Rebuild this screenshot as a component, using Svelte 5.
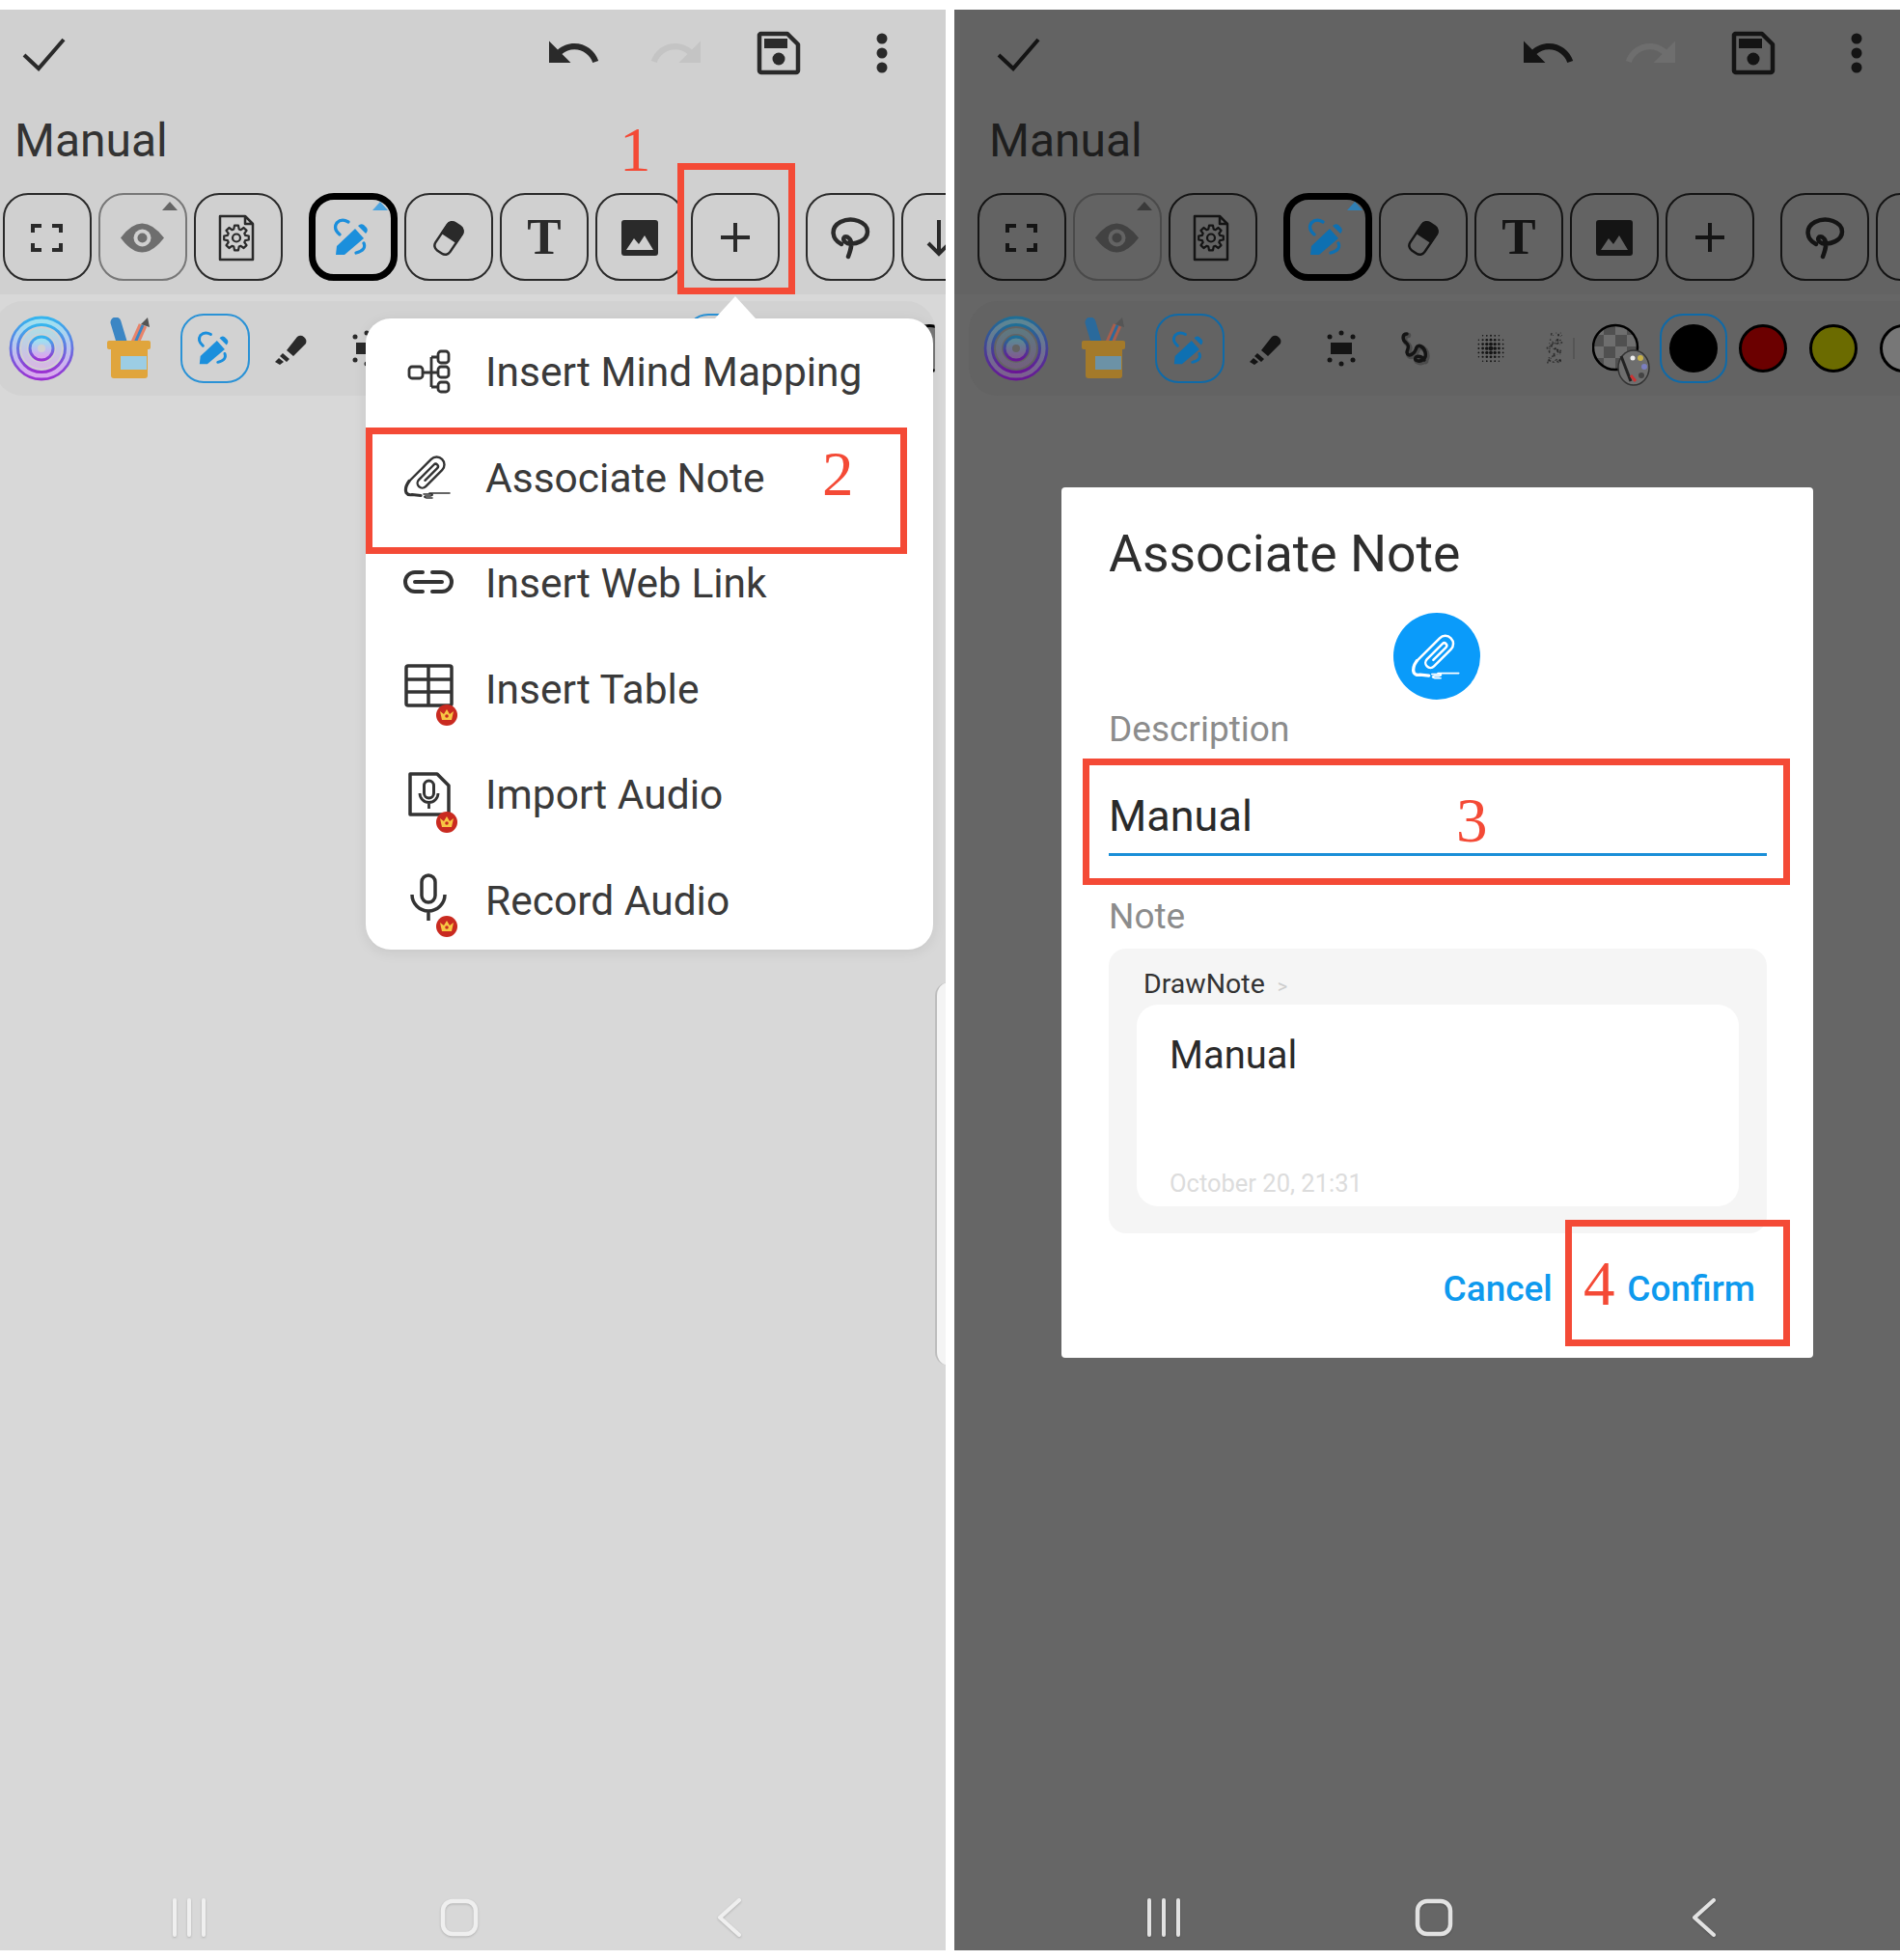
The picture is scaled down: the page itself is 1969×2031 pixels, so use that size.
<script>
  const menu = ['Insert Mind Mapping', 'Associate Note', 'Insert Web Link', 'Insert Table', 'Import Audio', 'Record Audio']

  // halftone brush preview
  const halftone = []
  for (let i = -3; i <= 3; i++) {
    for (let j = -3; j <= 3; j++) {
      const d = Math.hypot(i, j)
      if (d < 3.7) halftone.push({ x: 15 + i * 4.2, y: 16 + j * 4.4, r: Math.max(0.7, 2.3 - d * 0.45) })
    }
  }

  // speckle brush preview
  let seed = 7
  const rnd = () => (seed = (seed * 16807) % 2147483647) / 2147483647
  const speckle = Array.from({ length: 70 }, () => {
    const y = rnd() * 32 + 1
    return { x: 10 + (rnd() - 0.5) * 15, y, r: 0.4 + rnd() * 0.7 }
  })

  function gear(cx, cy, r1, r2, n) {
    const step = (Math.PI * 2) / n
    let d = ''
    for (let i = 0; i < n; i++) {
      const a = i * step
      const pts = [[a - step * 0.36, r1], [a - step * 0.2, r2], [a + step * 0.2, r2], [a + step * 0.36, r1]]
      for (const [t, r] of pts) {
        d += (d ? 'L' : 'M') + (cx + Math.cos(t) * r).toFixed(1) + ' ' + (cy + Math.sin(t) * r).toFixed(1)
      }
    }
    return d + 'Z'
  }
  const gearPath = gear(28, 30.5, 9.5, 13, 8)
</script>

{#snippet pen()}
  <path d="M12 48 L13 39 L32 21 L41 31 L21 48 Z" fill="var(--blue)" />
  <path d="M35 18 q3 -3 6 -1 l3 3 q2 3 -1 6 Z" fill="var(--blue)" />
  <path d="M25 14 q-7 -4 -12 1 q-4 6 3 12 M41 36 q3 7 -8 10" fill="none" stroke="var(--blue)" stroke-width="3.200" stroke-linecap="round" />
{/snippet}

{#snippet clip(color)}
  <g fill="none" stroke={color} stroke-linecap="round" stroke-linejoin="round">
    <path transform="rotate(45 30 26)" d="M22 46 V14 a8 8 0 0 1 16 0 V38 a5 5 0 0 1 -10 0 V16 a2.500 2.500 0 0 1 5 0 V34" stroke-width="2.400" />
    <path d="M10 34.500 q-5 7 -3 12 q2 3 6 2 l9 1" stroke-width="3.200" />
    <path d="M25 48 h8 q3 1 -1 2 h-5 q-3 1 1 2 h6 M31 47 h21" stroke-width="1.600" />
  </g>
{/snippet}

{#snippet crown(y)}
  <circle cx="49" cy={y} r="11" fill="#c92a20" />
  <path d="M42 {y - 4} L46 {y - 1} L49 {y - 6} L52 {y - 1} L56 {y - 4} L54 {y + 5} H44 Z" fill="#f7c744" />
  <circle cx="49" cy={y + 1} r="1.800" fill="#c92a20" />
{/snippet}

{#snippet app(key)}
  <div class="content">
    <header class="head">
      <div class="topbar">
        <svg class="check" width="46" height="60" viewBox="0 0 46 60">
          <path d="M3 32 L18 46 L44 16" fill="none" stroke="var(--ink)" stroke-width="4" />
        </svg>
        <svg class="undo" width="60" height="60" viewBox="0 0 24 24">
          <path d="M12.500 8c-2.650 0-5.050.99-6.900 2.600L2 7v9h9l-3.620-3.620c1.390-1.160 3.160-1.880 5.120-1.880 3.540 0 6.550 2.310 7.600 5.500l2.370-.78C21.080 11.030 17.150 8 12.500 8z" fill="var(--ink)" />
        </svg>
        <svg class="redo" width="60" height="60" viewBox="0 0 24 24">
          <path d="M18.400 10.600C16.550 8.990 14.150 8 11.500 8c-4.650 0-8.580 3.030-9.960 7.220L3.900 16c1.050-3.190 4.050-5.500 7.600-5.500 1.950 0 3.730.72 5.120 1.880L13 16h9V7l-3.600 3.600z" fill="var(--redo)" />
        </svg>
        <svg class="save" width="48" height="60" viewBox="0 0 48 60">
          <path d="M5 10 H33 L44 21 V48 a2 2 0 0 1 -2 2 H6 a2 2 0 0 1 -2 -2 V11 Z" fill="none" stroke="var(--ink)" stroke-width="4.500" stroke-linejoin="round" />
          <rect x="9" y="15" width="24" height="10" fill="var(--ink)" />
          <circle cx="24" cy="36" r="6.500" fill="var(--ink)" />
        </svg>
        <svg class="more" width="20" height="60" viewBox="0 0 20 60">
          <circle cx="10" cy="15" r="5.500" fill="var(--ink)" />
          <circle cx="10" cy="30" r="5.500" fill="var(--ink)" />
          <circle cx="10" cy="45" r="5.500" fill="var(--ink)" />
        </svg>
      </div>
      <div class="title">Manual</div>
      <div class="tools">
        <div class="group">
          <div class="btn">
            <svg width="60" height="60" viewBox="0 0 60 60"><path d="M15 25 V18 H24 M35 18 H44 V25 M44 36 V43 H35 M24 43 H15 V36" fill="none" stroke="var(--ink)" stroke-width="4" /></svg>
          </div>
          <div class="btn muted">
            <svg width="60" height="60" viewBox="0 0 60 60">
              <path d="M7 30.500 Q29 0.500 52 30.500 Q29 60.500 7 30.500 Z" fill="var(--eye)" />
              <circle cx="29.500" cy="30.500" r="9" fill="var(--head)" />
              <circle cx="29.500" cy="30.500" r="5" fill="var(--eye)" />
            </svg>
            <span class="tri"></span>
          </div>
          <div class="btn">
            <svg width="60" height="60" viewBox="0 0 60 60">
              <path d="M11 8 H37 L45 16 V53 H11 Z M37 8 V16 H45" fill="none" stroke="var(--ink)" stroke-width="2.500" stroke-linejoin="round" />
              <path d={gearPath} fill="none" stroke="var(--ink)" stroke-width="2.200" stroke-linejoin="round" />
              <circle cx="28" cy="30.500" r="4" fill="none" stroke="var(--ink)" stroke-width="2.200" />
            </svg>
          </div>
        </div>
        <div class="group">
          <div class="btn active">
            <svg width="60" height="60" viewBox="0 0 60 60">{@render pen()}</svg>
            <span class="tri blue"></span>
          </div>
          <div class="btn">
            <svg width="60" height="60" viewBox="0 0 60 60">
              <g transform="rotate(34 30 31)">
                <rect x="21" y="14" width="18" height="34" rx="6" fill="none" stroke="var(--ink)" stroke-width="2.500" />
                <path d="M20 31 V20 a6 6 0 0 1 6 -6 h8 a6 6 0 0 1 6 6 V31 Z" fill="var(--ink)" />
              </g>
            </svg>
          </div>
          <div class="btn"><span class="t-icon">T</span></div>
          <div class="btn">
            <svg width="60" height="60" viewBox="0 0 60 60">
              <rect x="11" y="12" width="38" height="37" rx="3" fill="var(--ink)" />
              <path d="M16 43 L24 31 L29 37 L35 28 L44 43 Z" fill="var(--head)" />
            </svg>
          </div>
          <div class="btn">
            <svg width="60" height="60" viewBox="0 0 60 60"><path d="M30 15 V45 M15 30 H45" stroke="var(--ink)" stroke-width="4" /></svg>
          </div>
        </div>
        <div class="group">
          <div class="btn">
            <svg width="60" height="60" viewBox="0 0 60 60">
              <path d="M21 37 C11 32 9 20 20 14 C32 8 48 14 48 24 C48 33 36 38 27 36 C20 33 24 26 29 31 C33 35 31 42 28 50" fill="none" stroke="var(--ink)" stroke-width="4.500" stroke-linecap="round" />
            </svg>
          </div>
          <div class="btn">
            <svg width="60" height="60" viewBox="0 0 60 60"><path d="M23 12 V47 M12 36 L23 47 L34 36" fill="none" stroke="var(--ink)" stroke-width="4" /></svg>
          </div>
        </div>
      </div>
    </header>

    <div class="strip">
      <svg width="68" height="68" viewBox="0 0 68 68">
        <defs>
          <linearGradient id="rings-{key}" x1="0" y1="0" x2="0" y2="1">
            <stop offset="0" stop-color="var(--ring1)" />
            <stop offset="1" stop-color="var(--ring2)" />
          </linearGradient>
          <linearGradient id="soft-{key}" x1="0" y1="0" x2="0" y2="1">
            <stop offset="0" stop-color="var(--soft1)" />
            <stop offset="1" stop-color="var(--soft2)" />
          </linearGradient>
        </defs>
        <circle cx="34" cy="34" r="28" fill="none" stroke="url(#soft-{key})" stroke-width="8" />
        <circle cx="34" cy="34" r="8" fill="none" stroke="url(#soft-{key})" stroke-width="8" />
        <circle cx="34" cy="34" r="18" fill="none" stroke="url(#soft-{key})" stroke-width="6" opacity="0.6" />
        <circle cx="34" cy="34" r="32" fill="none" stroke="url(#rings-{key})" stroke-width="2.800" />
        <circle cx="34" cy="34" r="24.500" fill="none" stroke="url(#rings-{key})" stroke-width="3" />
        <circle cx="34" cy="34" r="12" fill="none" stroke="url(#rings-{key})" stroke-width="3" />
      </svg>
      <svg width="46" height="64" viewBox="0 0 46 64">
        <path d="M9 5 L15 25" stroke="var(--pen1)" stroke-width="11" stroke-linecap="round" />
        <path d="M37 8 L29 26" stroke="var(--pen2)" stroke-width="9" />
        <path d="M37 8 L29 26" stroke="var(--pen1)" stroke-width="3" />
        <path d="M35 7 L42 0 L44 10 Z" fill="#555" />
        <rect y="24" width="45" height="9" rx="2" fill="var(--cup)" />
        <rect x="4" y="30" width="38" height="33" rx="3" fill="var(--cup)" />
        <rect x="14" y="40" width="27" height="14" fill="var(--label)" />
      </svg>
      <div class="sel pen-box">
        <svg width="54" height="54" viewBox="0 0 60 60">{@render pen()}</svg>
      </div>
      <svg width="34" height="34" viewBox="0 0 34 34">
        <path d="M12 19 L23 5 a6 6 0 0 1 9 7 L19 25 Z M8 22 L15 28 L12 31 L5 25 Z M4 27 L9 31 L5 34 L0 31 Z" fill="var(--ink)" />
      </svg>
      <svg width="34" height="38" viewBox="0 0 34 38">
        <rect x="6" y="13" width="22" height="12" fill="var(--ink)" />
        <circle cx="17" cy="3" r="2.500" fill="var(--ink)" />
        <circle cx="17" cy="35" r="2.500" fill="var(--ink)" />
        <circle cx="5" cy="7" r="2.500" fill="var(--ink)" />
        <circle cx="29" cy="7" r="2.500" fill="var(--ink)" />
        <circle cx="5" cy="31" r="2.500" fill="var(--ink)" />
        <circle cx="29" cy="31" r="2.500" fill="var(--ink)" />
      </svg>
      <svg width="34" height="36" viewBox="0 0 34 36">
        <g fill="none" stroke="var(--ink)" stroke-linecap="round">
          <path d="M8 3 C3 3 3 9 7 12 C12 16 8 19 8 22 C9 28 16 24 18 17 C20 13 26 17 27 22 C29 29 22 33 17 30 C15 26 22 24 26 30" stroke-width="5.500" opacity="0.3" transform="translate(1.500 1.500)" />
          <path d="M8 3 C3 3 3 9 7 12 C12 16 8 19 8 22 C9 28 16 24 18 17 C20 13 26 17 27 22 C29 29 22 33 17 30 C15 26 22 24 26 30" stroke-width="3.500" />
        </g>
      </svg>
      <svg width="30" height="32" viewBox="0 0 30 32">
        {#each halftone as d}<circle cx={d.x} cy={d.y} r={d.r} fill="var(--ink)" />{/each}
      </svg>
      <svg width="20" height="34" viewBox="0 0 20 34">
        {#each speckle as d}<circle cx={d.x} cy={d.y} r={d.r} fill="var(--ink)" opacity="0.6" />{/each}
      </svg>
      <span class="sep"></span>
      <svg class="swatch" width="62" height="70" viewBox="0 0 62 70">
        <defs>
          <clipPath id="disc-{key}"><circle cx="24" cy="25" r="23" /></clipPath>
        </defs>
        <circle cx="24" cy="25" r="23" fill="var(--check1)" />
        <g clip-path="url(#disc-{key})" fill="var(--check2)">
          <rect x="0" y="12" width="12" height="12" /><rect x="24" y="12" width="12" height="12" />
          <rect x="12" y="0" width="12" height="12" /><rect x="36" y="0" width="12" height="12" />
          <rect x="12" y="24" width="12" height="12" /><rect x="36" y="24" width="12" height="12" />
          <rect x="0" y="36" width="12" height="12" /><rect x="24" y="36" width="12" height="12" />
        </g>
        <circle cx="24" cy="25" r="23" fill="none" stroke="#000" stroke-width="2.500" />
        <ellipse cx="43" cy="46" rx="16" ry="18" fill="var(--check1)" stroke="#333" stroke-width="1.500" />
        <circle cx="50" cy="36" r="3" fill="#c8b24a" />
        <circle cx="54" cy="45" r="3" fill="#7b7fc0" />
        <circle cx="51" cy="54" r="3" fill="#444" />
        <circle cx="42" cy="36" r="2.500" fill="#eee" />
        <path d="M30 34 L40 60" stroke="#222" stroke-width="3" />
        <path d="M40 54 l5 6" stroke="#c33" stroke-width="3" />
      </svg>
      <div class="sel color-box"><span class="dot black"></span></div>
      <span class="dot red"></span>
      <span class="dot yellow"></span>
      <span class="dot grey"></span>
    </div>

    <div class="nav">
      <div class="nav-cell">
        <svg width="40" height="40" viewBox="0 0 40 40"><path d="M5 2 V38 M20 2 V38 M35 2 V38" stroke="var(--nav)" stroke-width="4" stroke-linecap="round" /></svg>
      </div>
      <div class="nav-cell">
        <svg width="40" height="40" viewBox="0 0 40 40"><rect x="3" y="3" width="34" height="34" rx="10" fill="none" stroke="var(--nav)" stroke-width="4.500" /></svg>
      </div>
      <div class="nav-cell">
        <svg width="40" height="40" viewBox="0 0 40 40"><path d="M30 2 L10 20 L30 38" fill="none" stroke="var(--nav)" stroke-width="4" stroke-linecap="round" stroke-linejoin="round" /></svg>
      </div>
    </div>
  </div>
{/snippet}

<div class="page">
  <section class="screen light">
    {@render app('l')}

    <aside class="handle"></aside>

    <div class="popup">
      {#each menu as label, i}
        <div class="item">
          <svg class="item-icon" width="60" height="60" viewBox="0 0 60 60">
            {#if i === 0}
              <g fill="none" stroke="#333" stroke-width="2.800">
                <rect x="10" y="25" width="14" height="12" rx="3" />
                <rect x="40" y="9" width="11" height="12" rx="3" />
                <rect x="40" y="25" width="11" height="11" rx="3" />
                <rect x="40" y="41" width="11" height="10" rx="3" />
                <path d="M24 31 H40 M33 15 H40 M33 46 H40 M33 15 V46" />
              </g>
            {:else if i === 1}
              {@render clip('#333')}
            {:else if i === 2}
              <path d="M24 20 H16 a10 10 0 0 0 0 20 H24 M34 20 H44 a10 10 0 0 1 0 20 H34 M16 30 H44" transform="translate(0,-1)" fill="none" stroke="#333" stroke-width="4" stroke-linecap="round" />
            {:else if i === 3}
              <g fill="none" stroke="#333" stroke-width="3.500">
                <rect x="7" y="7" width="47" height="41" rx="2" />
                <path d="M7 21 H54 M7 34 H54 M30 7 V48" />
              </g>
              {@render crown(58)}
            {:else if i === 4}
              <path d="M11 9 H39 L51 21 V51 H11 Z" fill="none" stroke="#333" stroke-width="3.500" stroke-linejoin="round" />
              <rect x="25.500" y="16" width="10" height="18" rx="5" fill="none" stroke="#333" stroke-width="3" />
              <path d="M21 29 a9.500 9.500 0 0 0 19 0 M30.500 38 V45" fill="none" stroke="#333" stroke-width="2.800" />
              {@render crown(59)}
            {:else}
              <rect x="23" y="5" width="14" height="28" rx="7" fill="none" stroke="#333" stroke-width="3.500" />
              <path d="M13 25 a17 17 0 0 0 34 0 M30 42 V52" fill="none" stroke="#333" stroke-width="3.500" />
              {@render crown(58)}
            {/if}
          </svg>
          <span>{label}</span>
        </div>
      {/each}
    </div>

    <div class="mark box1"></div>
    <span class="num n1">1</span>
    <div class="mark box2"></div>
    <span class="num n2">2</span>
  </section>

  <section class="screen dim">
    {@render app('d')}

    <div class="dialog">
      <h2>Associate Note</h2>
      <div class="clip-badge">
        <svg width="62" height="62" viewBox="0 0 60 60">{@render clip('#fff')}</svg>
      </div>
      <div class="label first">Description</div>
      <div class="input">Manual</div>
      <div class="label second">Note</div>
      <div class="note-card">
        <div class="crumb">DrawNote <i>&gt;</i></div>
        <div class="note">
          <div class="note-title">Manual</div>
          <div class="note-date">October 20, 21:31</div>
        </div>
      </div>
      <div class="actions">
        <span>Cancel</span>
        <span>Confirm</span>
      </div>
    </div>

    <div class="mark box3"></div>
    <span class="num n3">3</span>
    <div class="mark box4"></div>
    <span class="num n4">4</span>
  </section>
</div>

<style>
  :global(body) { margin: 0; background: #fff; }
  .page {
    width: 1969px; height: 2031px; padding-top: 10px; box-sizing: border-box;
    display: flex; gap: 9px; background: #fff; overflow: hidden;
    font-family: Roboto, "Liberation Sans", sans-serif;
  }
  .screen {
    position: relative; width: 980px; height: 2011px; flex-shrink: 0; overflow: hidden;
    background: var(--body); color: var(--text);
  }
  .light {
    --head: #d0d0d0; --body: #d8d8d8; --strip: #d2d2d2; --ink: #2a2a2a; --text: #333;
    --blue: #1b8fdc; --eye: #6e6e6e; --eyeline: #777; --redo: #c4c4c4; --nav: #efefef; --tri: #666; --triblue: #4ea5e0;
    --ring1: #35b5ee; --ring2: #9a30d2; --soft1: #9fe0f0; --soft2: #d9a8ee; --pen1: #3b86c4; --pen2: #e8836a; --cup: #e0a53c; --label: #9ccde4;
    --check1: #ddd; --check2: #aaa; --boxblue: #2a92d6;
  }
  .dim {
    --head: #636363; --body: #666; --strip: #636363; --ink: #141414; --text: #1e1e1e;
    --blue: #0e70b2; --eye: #424242; --eyeline: #4a4a4a; --redo: #6e6e6e; --nav: #e2e2e2; --tri: #3a3a3a; --triblue: #2f7fb5;
    --ring1: #1f6f96; --ring2: #6a1596; --soft1: #5c8694; --soft2: #7c5f90; --pen1: #2a6a9c; --pen2: #a85e4c; --cup: #a47a2a; --label: #6c92a6;
    --check1: #6e6e6e; --check2: #505050; --boxblue: #0f6aa8;
  }
  .dim .content { margin-left: 21px; }
  .content { width: 1100px; height: 100%; display: flex; flex-direction: column; }

  .head { background: var(--head); height: 295px; }
  .dim .head { margin-left: -21px; padding-left: 21px; }
  .topbar { height: 90px; display: flex; align-items: center; padding-left: 22px; }
  .undo { margin-left: 496px; }
  .redo { margin-left: 47px; }
  .save { margin-left: 52px; }
  .more { margin-left: 73px; }
  .title { margin: 16px 0 0 15px; font-size: 48px; line-height: 60px; }

  .tools { display: flex; gap: 27px; margin-top: 24px; padding-left: 3px; }
  .group { display: flex; gap: 7px; }
  .btn {
    position: relative; width: 92px; height: 91px; box-sizing: border-box;
    border: 2.500px solid var(--ink); border-radius: 26px;
    display: flex; align-items: center; justify-content: center;
  }
  .btn.muted { border-color: var(--eyeline); }
  .btn.active { border: 7px solid #000; }
  .tri {
    position: absolute; top: 7px; right: 8px; width: 0; height: 0;
    border-left: 8px solid transparent; border-right: 8px solid transparent; border-bottom: 9px solid var(--tri);
  }
  .tri.blue { top: 2px; right: 3px; border-bottom-color: var(--triblue); }
  .t-icon { font: bold 53px/1 "Liberation Serif", serif; color: var(--ink); }

  .strip {
    margin: 7px 0 0 -6px; width: 975px; height: 98px; flex-shrink: 0; overflow: hidden;
    background: var(--strip); border-radius: 30px;
    display: grid; align-items: center; justify-items: center;
    grid-template-columns: 98px 84px 94px 64px 92px 62px 94px 38px 2px 84px 78px 66px 80px 66px;
  }
  .dim .strip { width: 1008px; }
  .sep { width: 2px; height: 22px; background: #555; }
  .swatch { justify-self: start; margin: 18px 0 0 18px; }
  .sel {
    width: 72px; height: 72px; box-sizing: border-box; border: 2.500px solid var(--boxblue); border-radius: 24px;
    display: flex; align-items: center; justify-content: center;
  }
  .color-box { width: 70px; }
  .dot { width: 50px; height: 50px; box-sizing: border-box; border-radius: 50%; border: 3px solid #000; }
  .black { background: #000; }
  .red { background: #6b0000; }
  .yellow { background: #6b6b00; }
  .grey { background: #777; }

  .nav { margin-top: auto; height: 40px; padding: 0 0 14px 56px; display: flex; }
  .nav-cell { width: 280px; display: flex; justify-content: center; }
  .nav-cell svg { filter: drop-shadow(0 1px 1px rgba(0, 0, 0, 0.18)); }

  .handle {
    position: absolute; left: 969px; top: 1008px; width: 20px; height: 397px; box-sizing: border-box;
    background: #f4f4f4; border-left: 2px solid #bdbdbd; border-radius: 14px 0 0 14px;
  }

  .popup {
    position: absolute; left: 379px; top: 320px; width: 588px; height: 654px;
    background: #fff; border-radius: 26px; box-shadow: 0 3px 14px rgba(0, 0, 0, 0.08);
  }
  .popup::before {
    content: ''; position: absolute; left: 362px; top: -23px; width: 0; height: 0;
    border-left: 21px solid transparent; border-right: 21px solid transparent; border-bottom: 23px solid #fff;
  }
  .item { height: 109.500px; display: flex; align-items: center; font-size: 42.500px; color: #3a3a3a; }
  .item span { margin-top: 2px; }
  .item-icon { margin: 0 29.500px 0 34.500px; overflow: visible; flex-shrink: 0; }

  .mark { position: absolute; box-sizing: border-box; border: 7px solid #f44a36; }
  .num { position: absolute; font: 65px/1 "Liberation Serif", serif; color: #f44a36; }
  .box1 { left: 702px; top: 159px; width: 122px; height: 136px; }
  .box2 { left: 379px; top: 433px; width: 561px; height: 131px; }
  .box3 { left: 133px; top: 776px; width: 733px; height: 131px; }
  .box4 { left: 633px; top: 1254px; width: 233px; height: 131px; }
  .n1 { left: 642px; top: 113px; }
  .n2 { left: 852px; top: 449px; }
  .n3 { left: 520px; top: 808px; }
  .n4 { left: 652px; top: 1288px; }

  .dialog {
    position: absolute; left: 111px; top: 495px; width: 779px; height: 902px;
    background: #fff; border-radius: 4px; padding-left: 49px; box-sizing: border-box;
  }
  h2 { margin: 41px 0 0; font-size: 53.500px; line-height: 56px; font-weight: 400; color: #2e2e2e; }
  .clip-badge {
    width: 90px; height: 90px; border-radius: 50%; background: #0a9bfa; margin: 33px 0 0 295px;
    display: flex; align-items: center; justify-content: center;
  }
  .label { font-size: 37px; line-height: 40px; color: #8c8c8c; }
  .label.first { margin-top: 11px; }
  .label.second { margin-top: 43px; }
  .input {
    margin-top: 45px; width: 682px; padding-bottom: 13px; border-bottom: 3px solid #1a8fd8;
    font-size: 45px; line-height: 50px; color: #2a2a2a;
  }
  .note-card {
    margin-top: 13px; width: 682px; height: 295px; box-sizing: border-box; padding-top: 20px;
    background: #f5f5f5; border-radius: 18px;
  }
  .crumb { margin-left: 36px; font-size: 28.500px; line-height: 34px; color: #333; }
  .crumb i { font-style: normal; color: #ccc; font-size: 20px; margin-left: 6px; }
  .note {
    margin: 2px 0 0 29px; width: 624px; height: 209px; box-sizing: border-box;
    background: #fff; border-radius: 22px; padding: 31px 0 9px 34px;
    display: flex; flex-direction: column; justify-content: space-between;
  }
  .note-title { font-size: 40px; line-height: 44px; color: #2a2a2a; }
  .note-date { font-size: 25.500px; line-height: 30px; color: #dcdcdc; }
  .actions {
    margin-top: 33px; padding-right: 60px; display: flex; justify-content: flex-end; gap: 77.500px;
    font-size: 37px; line-height: 50px; font-weight: 500; color: #0e9aee;
  }
</style>
